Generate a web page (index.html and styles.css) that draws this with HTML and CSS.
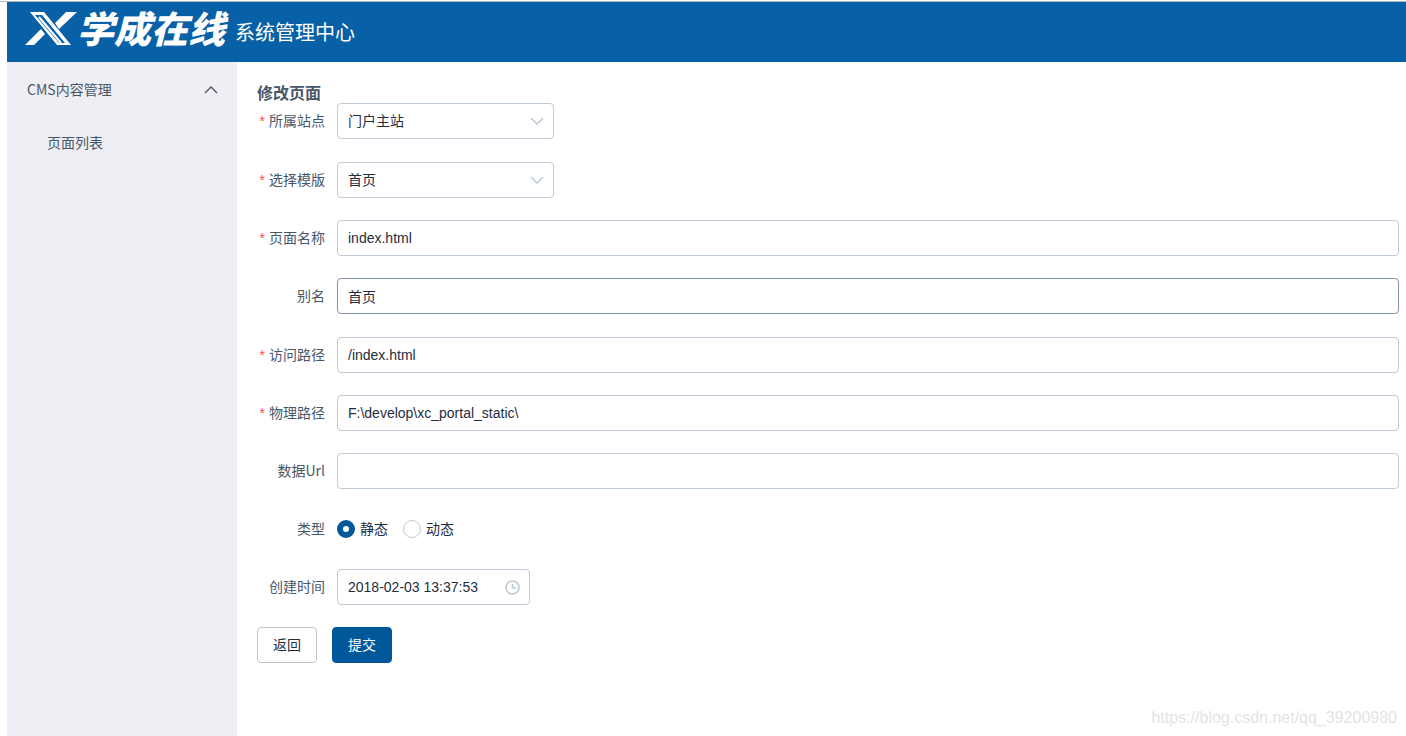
FILE: index.html
```html
<!DOCTYPE html>
<html lang="zh-CN">
<head>
<meta charset="utf-8">
<title>系统管理中心</title>
<link rel="stylesheet" href="styles.css">
</head>
<body>
<div class="app">
  <header class="header">
    <div class="logo">
      <svg class="logo-mark" viewBox="0 0 52 34" aria-hidden="true">
        <path fill="#fff" fill-rule="evenodd" d="M5 0H19L46 33H32ZM10 3L34 31H40L17 3Z"/>
        <path fill="none" stroke="#fff" stroke-width="2" d="M14 5L36 31"/>
        <path fill="#fff" d="M0 33L16 17L20 22L9 33ZM30 11L41 0H52L34 17Z"/>
      </svg>
      <span class="logo-text">学成在线</span>
    </div>
    <span class="header-title">系统管理中心</span>
  </header>
  <div class="body">
    <nav class="sidebar">
      <button class="menu-group" type="button" aria-expanded="true">
        <span>CMS内容管理</span>
        <svg class="menu-arrow" viewBox="0 0 14 8" aria-hidden="true"><path d="M1 7L7 1L13 7"/></svg>
      </button>
      <a class="menu-item" href="#">页面列表</a>
    </nav>
    <main class="content">
      <h1 class="page-title">修改页面</h1>
      <form class="form">
        <div class="row row-loose">
          <label class="label required" for="site">所属站点</label>
          <div class="select-box">
            <select class="field" id="site"><option>门户主站</option></select>
            <svg class="select-arrow" viewBox="0 0 14 8" aria-hidden="true"><path d="M1 1L7 7L13 1"/></svg>
          </div>
        </div>
        <div class="row">
          <label class="label required" for="template">选择模版</label>
          <div class="select-box">
            <select class="field" id="template"><option>首页</option></select>
            <svg class="select-arrow" viewBox="0 0 14 8" aria-hidden="true"><path d="M1 1L7 7L13 1"/></svg>
          </div>
        </div>
        <div class="row">
          <label class="label required" for="name">页面名称</label>
          <input class="field" id="name" type="text" value="index.html">
        </div>
        <div class="row row-loose">
          <label class="label" for="alias">别名</label>
          <input class="field field-active" id="alias" type="text" value="首页">
        </div>
        <div class="row">
          <label class="label required" for="web-path">访问路径</label>
          <input class="field" id="web-path" type="text" value="/index.html">
        </div>
        <div class="row">
          <label class="label required" for="disk-path">物理路径</label>
          <input class="field" id="disk-path" type="text" value="F:\develop\xc_portal_static\">
        </div>
        <div class="row">
          <label class="label" for="data-url">数据Url</label>
          <input class="field" id="data-url" type="text">
        </div>
        <div class="row" role="radiogroup" aria-labelledby="type-label">
          <span class="label" id="type-label">类型</span>
          <div class="radios">
            <label class="radio"><input class="radio-input" type="radio" name="type" checked><span class="radio-text">静态</span></label>
            <label class="radio"><input class="radio-input" type="radio" name="type"><span class="radio-text">动态</span></label>
          </div>
        </div>
        <div class="row">
          <label class="label" for="created">创建时间</label>
          <div class="date-box">
            <input class="field" id="created" type="text" value="2018-02-03 13:37:53">
            <svg class="date-icon" viewBox="0 0 15 15" aria-hidden="true"><circle cx="7.5" cy="7.5" r="6.5"/><path d="M7.5 4V8H11"/></svg>
          </div>
        </div>
        <div class="actions">
          <button class="btn" type="button">返回</button>
          <button class="btn btn-primary" type="button">提交</button>
        </div>
      </form>
    </main>
  </div>
</div>
<span class="watermark">https://blog.csdn.net/qq_39200980</span>
</body>
</html>
```
FILE: styles.css
```css
* {
  box-sizing: border-box;
}

body {
  margin: 0;
  padding-top: 1px;
  background: #fff;
  color: #48576a;
  font-family: "Noto Sans CJK SC", sans-serif;
  font-size: 14px;
}

.app {
  display: flex;
  flex-direction: column;
  min-height: calc(100vh - 1px);
  padding-left: 7px;
  border-top: 1px solid #b8b8b8;
}

.header {
  display: flex;
  align-items: center;
  gap: 10px;
  height: 60px;
  padding-left: 18px;
  background: #0860a6;
  color: #fff;
}

.logo {
  display: flex;
  align-items: center;
  width: 200px;
  height: 60px;
  padding-bottom: 6px;
}

.logo-mark {
  flex: none;
  width: 52px;
  height: 34px;
}

.logo-text {
  padding-bottom: 4px;
  font-size: 37px;
  font-style: italic;
  font-weight: 900;
  line-height: 40px;
  white-space: nowrap;
}

.header-title {
  font-size: 20px;
  line-height: 30px;
}

.body {
  display: flex;
  flex: 1;
}

.sidebar {
  flex: none;
  width: 230px;
  background: #eeeef4;
}

.menu-group {
  display: flex;
  align-items: center;
  justify-content: space-between;
  width: 100%;
  height: 54px;
  padding: 0 19px 0 20px;
  border: 0;
  background: none;
  color: inherit;
  font: inherit;
}

.menu-arrow,
.select-arrow {
  width: 14px;
  height: 8px;
  fill: none;
  stroke: #48576a;
}

.menu-arrow {
  margin-top: 2px;
  stroke-width: 1.4;
}

.menu-item {
  display: block;
  padding-left: 40px;
  color: inherit;
  line-height: 52px;
  text-decoration: none;
}

.content {
  flex: 1;
  padding: 20px 7px 20px 20px;
}

.page-title {
  margin: 0;
  font-size: 16px;
  font-weight: 700;
  line-height: 21px;
}

.row {
  display: flex;
  height: 36px;
  margin-bottom: 22px;
}

.row-loose {
  margin-bottom: 23px;
}

.label {
  flex: none;
  width: 80px;
  padding-right: 12px;
  line-height: 34px;
  text-align: right;
}

.required::before {
  content: "*";
  margin-right: 4px;
  color: #ff4949;
  font-family: "Liberation Sans", sans-serif;
}

.field {
  width: 100%;
  height: 36px;
  padding: 0 10px;
  border: 1px solid #bfcbd9;
  border-radius: 4px;
  outline: 0;
  appearance: none;
  background: #fff;
  color: #1f2d3d;
  font-family: "Liberation Sans", "Noto Sans CJK SC", sans-serif;
  font-size: 14px;
}

.field-active {
  border-color: #8391a5;
}

.select-box {
  position: relative;
  width: 217px;
}

.select-arrow {
  position: absolute;
  top: 14px;
  right: 10px;
  stroke: #bfcbd9;
  stroke-width: 1.6;
  pointer-events: none;
}

.radios {
  display: flex;
  gap: 15px;
  color: #1f2d3d;
}

.radio {
  display: flex;
  align-items: center;
  gap: 5px;
}

.radio-text {
  padding-bottom: 2px;
}

.radio-input {
  width: 18px;
  height: 18px;
  margin: 0;
  border: 1px solid #bfcbd9;
  border-radius: 50%;
  appearance: none;
  background: #fff;
}

.radio-input:checked {
  border: 6px solid #00579a;
}

.date-box {
  position: relative;
  width: 193px;
}

.date-icon {
  position: absolute;
  top: 11px;
  right: 10px;
  width: 15px;
  height: 15px;
  fill: none;
  stroke: #bfcbd9;
  stroke-width: 1.6;
}

.actions {
  display: flex;
  gap: 15px;
}

.btn {
  width: 60px;
  height: 36px;
  padding: 0 0 2px;
  border: 1px solid #c4c4c4;
  border-radius: 4px;
  background: #fff;
  color: #1f2d3d;
  font: inherit;
}

.btn-primary {
  border-color: #00579a;
  background: #00579a;
  color: #fff;
}

.watermark {
  position: absolute;
  right: 9px;
  bottom: 9px;
  color: #e4e4e4;
  font-family: "Liberation Sans", sans-serif;
  font-size: 16px;
  line-height: 18px;
}
```
